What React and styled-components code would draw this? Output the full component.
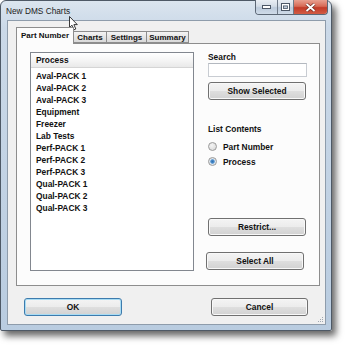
import styled, { createGlobalStyle } from 'styled-components';

const GlobalStyle = createGlobalStyle`
  html, body {
    margin: 0;
    padding: 0;
    background: #ffffff;
  }
  * {
    box-sizing: border-box;
  }
`;

const Page = styled.div`
  position: relative;
  width: 347px;
  height: 346px;
  font-family: "Liberation Sans", Arial, sans-serif;
  color: #111;
`;

const Window = styled.div`
  position: relative;
  width: 332px;
  height: 331px;
  display: flex;
  flex-direction: column;
  border: 1px solid #4e5966;
  border-radius: 6px 6px 2px 2px;
  background: linear-gradient(180deg, #dbe5ef 0%, #cbd9e8 8%, #b9cce0 100%);
  box-shadow: 4px 5px 7px rgba(0, 0, 0, 0.6);
`;

const TitleBar = styled.div`
  height: 19px;
  display: flex;
  justify-content: space-between;
  align-items: flex-start;
`;

const Title = styled.span`
  font-size: 8.3px;
  line-height: 8px;
  margin: 6px 0 0 5px;
  color: #1c1c1c;
`;

const Caption = styled.div`
  display: flex;
  height: 15px;
  margin: -1px 3px 0 0;
  border: 1px solid #5c6775;
  border-top: none;
  border-radius: 0 0 4px 4px;
  overflow: hidden;
`;

const CapButton = styled.div`
  width: ${(p) => p.$w}px;
  display: flex;
  align-items: center;
  justify-content: center;
  border-left: ${(p) => (p.$first ? 'none' : '1px solid #6f7a88')};
  background: ${(p) =>
    p.$close
      ? 'linear-gradient(180deg, #e8a090 0%, #d76a56 45%, #c23a28 55%, #d25c44 100%)'
      : 'linear-gradient(180deg, #e9eef4 0%, #d3dce6 45%, #bccadb 55%, #cfdbe8 100%)'};
`;

const Client = styled.div`
  position: relative;
  flex: 1;
  margin: 0 5px 5px 6px;
  padding: 7px 0 0 8px;
  border: 1px solid #8e9cab;
  background: #f0f0f0;
  display: flex;
  flex-direction: column;
`;

const TabStrip = styled.div`
  display: flex;
  align-items: flex-end;
  height: 15px;
`;

const Tab = styled.div`
  position: relative;
  z-index: ${(p) => (p.$active ? 2 : 1)};
  width: ${(p) => p.$w}px;
  height: ${(p) => (p.$active ? 17 : 12)}px;
  margin-bottom: ${(p) => (p.$active ? -1 : 0)}px;
  padding-top: ${(p) => (p.$active ? 3 : 1)}px;
  border: 1px solid #8d8d8d;
  border-bottom: ${(p) => (p.$active ? 'none' : '1px solid #8d8d8d')};
  border-left: ${(p) => (p.$first || p.$active ? '1px solid #8d8d8d' : 'none')};
  background: ${(p) =>
    p.$active ? '#fcfcfc' : 'linear-gradient(180deg, #f4f4f4 0%, #e5e5e5 50%, #d9d9d9 100%)'};
  font-size: 8px;
  font-weight: bold;
  line-height: 9px;
  text-align: center;
  color: #111;
`;

const Panel = styled.div`
  width: 304px;
  height: 243px;
  border: 1px solid #8d8d8d;
  background: #fcfcfc;
  padding: 8px 0 0 13px;
  display: flex;
  gap: 14px;
`;

const ListBox = styled.div`
  width: 164px;
  height: 219px;
  border: 1px solid #82878f;
  background: #fff;
`;

const ListHeader = styled.div`
  height: 15px;
  padding-left: 5px;
  border-bottom: 1px solid #d5d5d5;
  background: linear-gradient(180deg, #ffffff 0%, #f3f3f3 60%, #e9e9e9 100%);
  font-size: 8.4px;
  font-weight: bold;
  line-height: 15px;
`;

const ListItems = styled.div`
  padding: 2px 0 0 5px;
`;

const ListItem = styled.div`
  font-size: 8.4px;
  font-weight: bold;
  line-height: 12px;
  height: 12px;
`;

const Side = styled.div`
  width: 99px;
  display: flex;
  flex-direction: column;
`;

const Label = styled.div`
  font-size: 8.4px;
  font-weight: bold;
  line-height: 10px;
  margin-top: ${(p) => p.$top || 0}px;
`;

const SearchInput = styled.div`
  margin-top: 1px;
  height: 14px;
  width: 99px;
  border: 1px solid #c8ccd2;
  border-top-color: #b3b8bf;
  background: #fff;
`;

const Button = styled.div`
  width: ${(p) => p.$w || 98}px;
  height: 18px;
  margin-top: ${(p) => p.$top || 0}px;
  margin-left: ${(p) => p.$left || 0}px;
  display: flex;
  align-items: center;
  justify-content: center;
  border: 1px solid ${(p) => (p.$focus ? '#3d7bad' : '#707070')};
  border-radius: 3px;
  background: linear-gradient(180deg, #f4f4f4 0%, #ececec 48%, #dedede 52%, #d2d2d2 100%);
  box-shadow: ${(p) => (p.$focus ? 'inset 0 0 0 1px #a8dcf4' : 'inset 0 0 0 1px #f8f8f8')};
  font-size: 8.4px;
  font-weight: bold;
  color: #111;
`;

const RadioRow = styled.div`
  display: flex;
  align-items: center;
  height: 15px;
  margin-top: ${(p) => p.$top || 0}px;
  font-size: 8.4px;
  font-weight: bold;
  gap: 6px;
`;

const RadioDot = styled.span`
  width: 9px;
  height: 9px;
  border-radius: 50%;
  border: 1px solid #9a9a9a;
  background: ${(p) =>
    p.$on
      ? 'radial-gradient(circle, #2f6fb0 0, #4f91cf 1.8px, #dfe8f0 2.6px, #dcdcdc 100%)'
      : 'radial-gradient(circle at 40% 35%, #f4f4f4 0, #d6d6d6 100%)'};
`;

const Footer = styled.div`
  display: flex;
  margin-top: 12px;
  padding-left: 8px;
  gap: 89px;
`;

const Grip = styled.svg`
  position: absolute;
  right: 1px;
  bottom: 1px;
`;

const Cursor = styled.svg`
  position: absolute;
  left: 69px;
  top: 16px;
`;

const items = [
  'Aval-PACK 1',
  'Aval-PACK 2',
  'Aval-PACK 3',
  'Equipment',
  'Freezer',
  'Lab Tests',
  'Perf-PACK 1',
  'Perf-PACK 2',
  'Perf-PACK 3',
  'Qual-PACK 1',
  'Qual-PACK 2',
  'Qual-PACK 3',
];

const tabs = [
  { name: 'Part Number', w: 58, active: true },
  { name: 'Charts', w: 33 },
  { name: 'Settings', w: 40 },
  { name: 'Summary', w: 42 },
];

export default function App() {
  return (
    <Page>
      <GlobalStyle />
      <Window>
        <TitleBar>
          <Title>New DMS Charts</Title>
          <Caption>
            <CapButton $w={21} $first>
              <svg width="9" height="4" viewBox="0 0 9 4">
                <rect x="0.5" y="0.5" width="8" height="3" fill="#fff" stroke="#4c5766" />
              </svg>
            </CapButton>
            <CapButton $w={16}>
              <svg width="9" height="8" viewBox="0 0 9 8">
                <rect x="0.5" y="0.5" width="8" height="7" fill="none" stroke="#4c5766" />
                <rect x="1.5" y="1.5" width="6" height="5" fill="none" stroke="#fff" />
                <rect x="2.5" y="3" width="4" height="2.5" fill="none" stroke="#4c5766" strokeWidth="0.8" />
              </svg>
            </CapButton>
            <CapButton $w={34} $close>
              <svg width="11" height="9" viewBox="0 0 11 9">
                <path d="M1.5 1 L9.5 8 M9.5 1 L1.5 8" stroke="#6b2a22" strokeWidth="3.2" />
                <path d="M1.5 1 L9.5 8 M9.5 1 L1.5 8" stroke="#fff" strokeWidth="1.8" />
              </svg>
            </CapButton>
          </Caption>
        </TitleBar>
        <Client>
          <TabStrip>
            {tabs.map((t, i) => (
              <Tab key={t.name} $w={t.w} $active={t.active} $first={i === 0}>
                {t.name}
              </Tab>
            ))}
          </TabStrip>
          <Panel>
            <ListBox>
              <ListHeader>Process</ListHeader>
              <ListItems>
                {items.map((it) => (
                  <ListItem key={it}>{it}</ListItem>
                ))}
              </ListItems>
            </ListBox>
            <Side>
              <Label>Search</Label>
              <SearchInput />
              <Button $top={5}>Show Selected</Button>
              <Label $top={24}>List Contents</Label>
              <RadioRow $top={5}>
                <RadioDot />
                Part Number
              </RadioRow>
              <RadioRow>
                <RadioDot $on />
                Process
              </RadioRow>
              <Button $top={49}>Restrict...</Button>
              <Button $top={16} $left={-2}>Select All</Button>
            </Side>
          </Panel>
          <Footer>
            <Button $focus>OK</Button>
            <Button $w={97}>Cancel</Button>
          </Footer>
          <Grip width="8" height="8" viewBox="0 0 8 8">
            {[
              [6, 2],
              [6, 4],
              [4, 4],
              [6, 6],
              [4, 6],
              [2, 6],
            ].map(([x, y]) => (
              <rect key={`${x}-${y}`} x={x} y={y} width="1" height="1" fill="#a0a8b2" />
            ))}
          </Grip>
        </Client>
      </Window>
      <Cursor width="10" height="15" viewBox="0 0 10 15">
        <path
          d="M0.5 0.5 L0.5 11.5 L3 9.2 L5 13.8 L6.8 13 L4.9 8.6 L8.3 8.6 Z"
          fill="#fff"
          stroke="#222"
          strokeWidth="0.9"
          strokeLinejoin="round"
        />
      </Cursor>
    </Page>
  );
}
